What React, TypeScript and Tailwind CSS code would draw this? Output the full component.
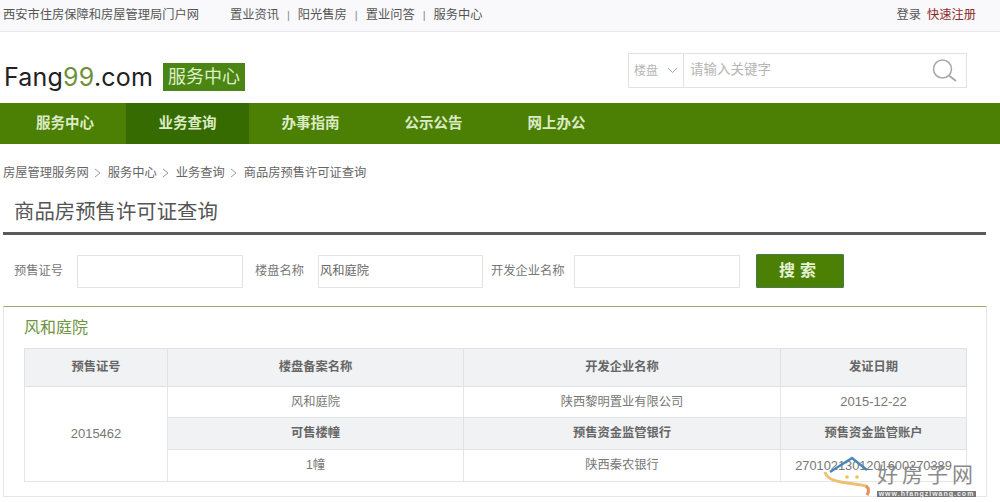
const font = "font-['Liberation_Sans','Noto_Sans_CJK_SC',sans-serif]";

const topLinks = ["置业资讯", "阳光售房", "置业问答", "服务中心"];
const navItems = ["服务中心", "业务查询", "办事指南", "公示公告", "网上办公"];
const crumbs = ["房屋管理服务网", "服务中心", "业务查询", "商品房预售许可证查询"];

function Chevron() {
  return (
    <svg width="8" height="10" viewBox="0 0 8 10" className="mx-[5.5px]">
      <path d="M1 1l5 4-5 4" fill="none" stroke="#999" strokeWidth="1" />
    </svg>
  );
}

function Watermark() {
  return (
    <div className="absolute left-[822px] top-[456px] w-[178px] h-[46px]">
      <svg width="54" height="44" viewBox="0 0 54 44" className="absolute left-0 top-0">
        <path d="M3 16C6 28 28 26 44 30C47 32 47 36 45 39" fill="none" stroke="#efc071" strokeWidth="3" />
        <path d="M44 30C47 32 47 36 45 39" fill="none" stroke="#e98f5e" strokeWidth="3" />
        <path d="M8 16L30 2L45 14" fill="none" stroke="#4a86b8" strokeWidth="2.500" />
        <circle cx="25" cy="21" r="1.800" fill="#eec04e" />
        <circle cx="35" cy="21" r="1.800" fill="#eec04e" />
      </svg>
      <div className="absolute left-[55px] top-[3px] text-[21px] leading-[28px] tracking-[4px] text-[#8a8a8a] font-['Noto_Sans_CJK_SC',serif] whitespace-nowrap">
        好房子网
      </div>
      <div className="absolute left-[55px] top-[35px] w-[99px] h-[6px] bg-[#777] text-[#eee] text-[7px] leading-[6px] font-bold tracking-[1px] text-center whitespace-nowrap">
        www.hfangziwang.com
      </div>
    </div>
  );
}

function HeadCell({ children }: { children: React.ReactNode }) {
  return (
    <td className="bg-[#f1f2f4] border border-[#dfe1e4] text-center font-bold text-[#666]">
      {children}
    </td>
  );
}

function Cell({ children, className = "" }: { children: React.ReactNode; className?: string }) {
  return (
    <td className={`border border-[#e3e5e7] text-center text-[#777] ${className}`}>{children}</td>
  );
}

export default function App() {
  return (
    <div className={`relative w-[1000px] h-[502px] overflow-hidden bg-white ${font}`}>
      {/* top bar */}
      <div className="h-[32px] bg-[#f9f9fb] border-b border-[#e8e8ea] flex items-center justify-between pl-[3px] pr-[24px] text-[12.25px] text-[#555]">
        <div className="flex items-center">
          <span className="w-[227px]">西安市住房保障和房屋管理局门户网</span>
          {topLinks.map((t, i) => (
            <span key={t} className="flex items-center">
              {i > 0 && <span className="mx-[8px] text-[#888] text-[11px]">|</span>}
              {t}
            </span>
          ))}
        </div>
        <div className="flex gap-[6px]">
          <span>登录</span>
          <span className="text-[#8c2a2a]">快速注册</span>
        </div>
      </div>

      {/* logo + search */}
      <div className="h-[71px] flex items-start justify-between pl-[4px] pr-[33px]">
        <div className="flex items-center mt-[30px] h-[30px]">
          <span className="font-['Inter',sans-serif] text-[25px] leading-[30px] text-[#222] tracking-[0.2px]">
            Fang<span className="text-[#6f8f3a]">99</span>.com
          </span>
          <span className="ml-[10px] w-[82px] h-[28px] bg-[#4b8514] text-[#dff0c8] text-[18px] leading-[28px] text-center">
            服务中心
          </span>
        </div>
        <div className="mt-[21px] w-[339px] h-[35px] border border-[#e2e2e4] flex items-center text-[13.5px] text-[#b5b5b5]">
          <span className="w-[55px] h-full border-r border-[#e2e2e4] flex items-center pl-[5px] gap-[9px] text-[12px] shrink-0">
            楼盘
            <svg width="11" height="7" viewBox="0 0 11 7">
              <path d="M1 1l4.500 4.500L10 1" fill="none" stroke="#9aa" strokeWidth="1" />
            </svg>
          </span>
          <span className="pl-[6px] flex-1">请输入关键字</span>
          <svg width="25" height="24" viewBox="0 0 25 24" className="mr-[9px]">
            <circle cx="10.500" cy="10" r="9" fill="none" stroke="#a8a8a8" strokeWidth="1.500" />
            <path d="M17 16.500L24 22" stroke="#a8a8a8" strokeWidth="2" />
          </svg>
        </div>
      </div>

      {/* main nav */}
      <div className="h-[41px] bg-[#4b8005] flex text-[14.5px] font-bold text-[#dcebc4]">
        {navItems.map((n, i) => (
          <div
            key={n}
            className={`flex items-center justify-center ${i === 0 ? "w-[126px] pl-[4px]" : "w-[123px]"} ${i === 1 ? "bg-[#356b00]" : ""}`}
          >
            {n}
          </div>
        ))}
      </div>

      {/* breadcrumb */}
      <div className="mt-[19px] pl-[3px] h-[20px] flex items-center text-[12.25px] text-[#666]">
        {crumbs.map((c, i) => (
          <span key={c} className="flex items-center">
            {i > 0 && <Chevron />}
            {c}
          </span>
        ))}
      </div>

      {/* page title */}
      <div className="mx-[3px] mt-[10px] w-[983px] h-[42px] border-b-[3px] border-[#5a5a5a] pl-[11px] text-[20.4px] leading-[39px] text-[#555]">
        商品房预售许可证查询
      </div>

      {/* search form */}
      <div className="mt-[19px] h-[34px] flex items-center text-[12.25px] text-[#777]">
        <span className="ml-[14px] w-[63px]">预售证号</span>
        <div className="w-[166px] h-[33px] border border-[#e3e3e3]" />
        <span className="ml-[12px] w-[63px]">楼盘名称</span>
        <div className="w-[165px] h-[33px] border border-[#e3e3e3] pl-[1px] leading-[31px] text-[#666]">风和庭院</div>
        <span className="ml-[8px] w-[83px]">开发企业名称</span>
        <div className="w-[166px] h-[33px] border border-[#e3e3e3]" />
        <button className="ml-[16px] w-[88px] h-[34px] bg-[#4b8005] border border-[#4a7a50] text-[#e6f2d4] text-[16px] font-bold tracking-[5px] rounded-[1px]">
          搜索
        </button>
      </div>

      {/* result card */}
      <div className="mx-[3px] mt-[18px] w-[984px] h-[191px] border border-[#e6e6e8] border-t-[#9cad6a] pl-[20px] text-[12.25px]">
        <div className="h-[41px] pt-[10px] text-[16px] leading-[22px] text-[#6f9440]">风和庭院</div>
        <table className="w-[942px] table-fixed border-collapse">
          <colgroup>
            <col className="w-[143px]" />
            <col className="w-[296px]" />
            <col className="w-[317px]" />
            <col className="w-[186px]" />
          </colgroup>
          <tbody>
            <tr className="h-[38px]">
              <HeadCell>预售证号</HeadCell>
              <HeadCell>楼盘备案名称</HeadCell>
              <HeadCell>开发企业名称</HeadCell>
              <HeadCell>发证日期</HeadCell>
            </tr>
            <tr className="h-[31px]">
              <td rowSpan={3} className="border border-[#e3e5e7] text-center text-[#777] text-[13px]">
                2015462
              </td>
              <Cell>风和庭院</Cell>
              <Cell>陕西黎明置业有限公司</Cell>
              <Cell className="text-[13px]">2015-12-22</Cell>
            </tr>
            <tr className="h-[32px]">
              <HeadCell>可售楼幢</HeadCell>
              <HeadCell>预售资金监管银行</HeadCell>
              <HeadCell>预售资金监管账户</HeadCell>
            </tr>
            <tr className="h-[32px]">
              <Cell>1幢</Cell>
              <Cell>陕西秦农银行</Cell>
              <Cell className="text-[12.8px]">2701021301201600270389</Cell>
            </tr>
          </tbody>
        </table>
      </div>

      <Watermark />
    </div>
  );
}
